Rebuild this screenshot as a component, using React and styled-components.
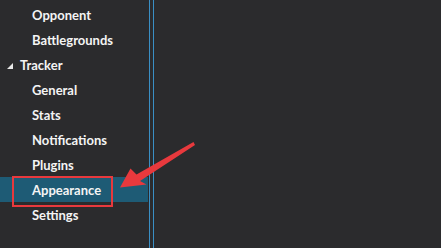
import React from "react";
import styled, { createGlobalStyle } from "styled-components";

const Global = createGlobalStyle`
  html, body { margin: 0; padding: 0; background: #2b2b2d; }
  body { font-family: Lato, "Open Sans", sans-serif; }
`;

const Page = styled.div`
  position: relative;
  display: flex;
  width: 441px;
  height: 248px;
  overflow: hidden;
  background: #2b2b2d;
`;

const Sidebar = styled.div`
  width: 148px;
  padding-top: 2px;
  display: flex;
  flex-direction: column;
`;

const Divider = styled.div`
  width: 1px;
  margin-left: ${(p) => p.$gap}px;
  background: #3a8fc4;
`;

const Main = styled.div`
  flex: 1;
`;

const Row = styled.div`
  height: 25px;
  display: flex;
  align-items: center;
  padding-left: ${(p) => (p.$child ? 32 : 7)}px;
  padding-top: 1px;
  box-sizing: border-box;
  color: #f4f4f4;
  font-size: 13px;
  font-weight: 700;
  background: ${(p) => (p.$selected ? "#1e5b75" : "transparent")};
`;

const Caret = styled.span`
  width: 0;
  height: 0;
  border-left: 6px solid transparent;
  border-bottom: 6px solid #e8e8e8;
  margin-right: 7px;
  margin-top: 1px;
`;

const Highlight = styled.div`
  position: absolute;
  left: 12px;
  top: 176px;
  width: 97px;
  height: 27px;
  border: 2.5px solid #e8393d;
`;

const Arrow = styled.svg`
  position: absolute;
  left: 0;
  top: 0;
  pointer-events: none;
`;

const items = [
  { label: "Opponent", child: true },
  { label: "Battlegrounds", child: true },
  { label: "Tracker", caret: true },
  { label: "General", child: true },
  { label: "Stats", child: true },
  { label: "Notifications", child: true },
  { label: "Plugins", child: true },
  { label: "Appearance", child: true, selected: true },
  { label: "Settings", child: true },
];

export default function App() {
  return (
    <>
      <Global />
      <Page>
        <Sidebar>
          {items.map((it) => (
            <Row key={it.label} $child={it.child} $selected={it.selected}>
              {it.caret && <Caret />}
              {it.label}
            </Row>
          ))}
        </Sidebar>
        <Divider $gap={1} />
        <Divider $gap={3} />
        <Main />
        <Highlight />
        <Arrow width="441" height="248" viewBox="0 0 441 248">
          <path
            d="M120 187.5 L130.5 168.5 L136.5 174.5 L193.5 142 L195 145 L140 181 L146.5 184.5 Z"
            fill="#e8393d"
          />
        </Arrow>
      </Page>
    </>
  );
}
